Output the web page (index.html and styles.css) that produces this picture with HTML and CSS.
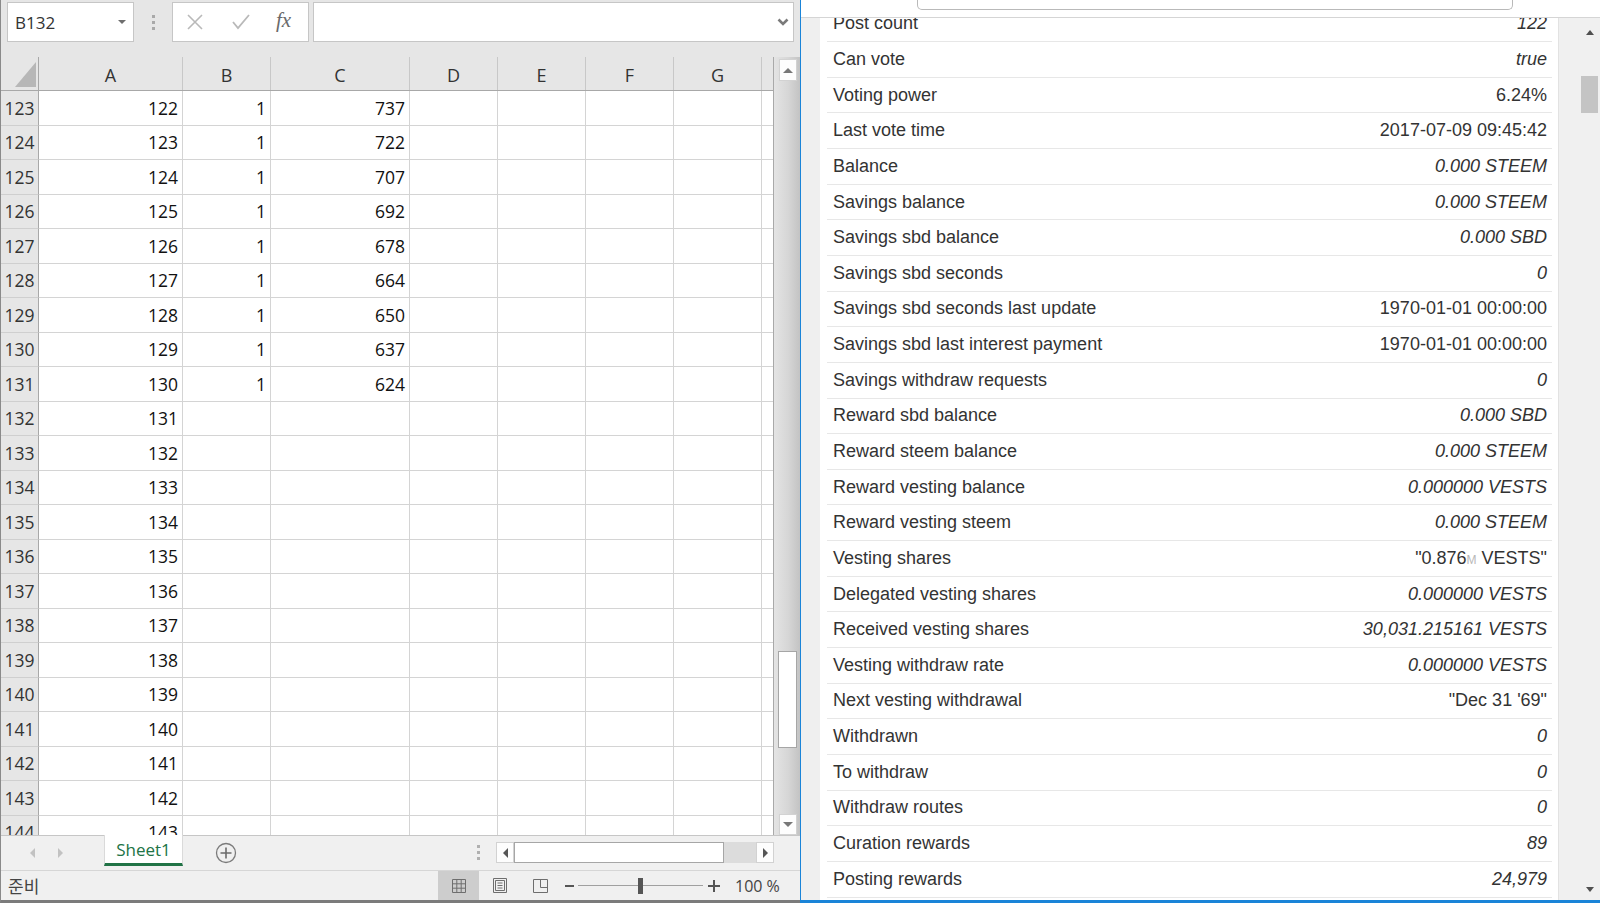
FILE: index.html
```html
<!DOCTYPE html>
<html>
<head>
<meta charset="utf-8">
<link rel="stylesheet" href="styles.css">
</head>
<body>
<div class="screen">
  <div class="excel">
    <div class="fbar">
      <div class="namebox"><span>B132</span><span class="tri-down"></span></div>
      <div class="grip"><i></i><i></i><i></i></div>
      <div class="fbtns">
        <svg class="ico-x" width="18" height="18" viewBox="0 0 18 18"><path d="M2 2 L16 16 M16 2 L2 16" stroke="#b9b9b9" stroke-width="1.6" fill="none"/></svg>
        <svg class="ico-ok" width="20" height="18" viewBox="0 0 20 18"><path d="M2 9 L7 15 L18 2" stroke="#b9b9b9" stroke-width="1.8" fill="none"/></svg>
        <span class="fx">fx</span>
      </div>
      <div class="finput">
        <svg width="12" height="8" viewBox="0 0 12 8"><path d="M1.5 1.5 L6 6 L10.5 1.5" stroke="#7a7a7a" stroke-width="2.6" fill="none"/></svg>
      </div>
    </div>
    <div class="sheet">
      <div class="grid">
        <div class="hdr">
          <div class="corner"><svg width="21" height="25" viewBox="0 0 21 25"><path d="M21 0 L21 25 L0 25 Z" fill="#b7b7b7"/></svg></div>
          <div>A</div><div>B</div><div>C</div><div>D</div><div>E</div><div>F</div><div>G</div><div class="last"></div>
        </div>
        <div class="rows">
          <div class="row"><div class="rh">123</div><div>122</div><div>1</div><div>737</div><div></div><div></div><div></div><div></div><div class="last"></div></div>
          <div class="row"><div class="rh">124</div><div>123</div><div>1</div><div>722</div><div></div><div></div><div></div><div></div><div class="last"></div></div>
          <div class="row"><div class="rh">125</div><div>124</div><div>1</div><div>707</div><div></div><div></div><div></div><div></div><div class="last"></div></div>
          <div class="row"><div class="rh">126</div><div>125</div><div>1</div><div>692</div><div></div><div></div><div></div><div></div><div class="last"></div></div>
          <div class="row"><div class="rh">127</div><div>126</div><div>1</div><div>678</div><div></div><div></div><div></div><div></div><div class="last"></div></div>
          <div class="row"><div class="rh">128</div><div>127</div><div>1</div><div>664</div><div></div><div></div><div></div><div></div><div class="last"></div></div>
          <div class="row"><div class="rh">129</div><div>128</div><div>1</div><div>650</div><div></div><div></div><div></div><div></div><div class="last"></div></div>
          <div class="row"><div class="rh">130</div><div>129</div><div>1</div><div>637</div><div></div><div></div><div></div><div></div><div class="last"></div></div>
          <div class="row"><div class="rh">131</div><div>130</div><div>1</div><div>624</div><div></div><div></div><div></div><div></div><div class="last"></div></div>
          <div class="row"><div class="rh">132</div><div>131</div><div></div><div></div><div></div><div></div><div></div><div></div><div class="last"></div></div>
          <div class="row"><div class="rh">133</div><div>132</div><div></div><div></div><div></div><div></div><div></div><div></div><div class="last"></div></div>
          <div class="row"><div class="rh">134</div><div>133</div><div></div><div></div><div></div><div></div><div></div><div></div><div class="last"></div></div>
          <div class="row"><div class="rh">135</div><div>134</div><div></div><div></div><div></div><div></div><div></div><div></div><div class="last"></div></div>
          <div class="row"><div class="rh">136</div><div>135</div><div></div><div></div><div></div><div></div><div></div><div></div><div class="last"></div></div>
          <div class="row"><div class="rh">137</div><div>136</div><div></div><div></div><div></div><div></div><div></div><div></div><div class="last"></div></div>
          <div class="row"><div class="rh">138</div><div>137</div><div></div><div></div><div></div><div></div><div></div><div></div><div class="last"></div></div>
          <div class="row"><div class="rh">139</div><div>138</div><div></div><div></div><div></div><div></div><div></div><div></div><div class="last"></div></div>
          <div class="row"><div class="rh">140</div><div>139</div><div></div><div></div><div></div><div></div><div></div><div></div><div class="last"></div></div>
          <div class="row"><div class="rh">141</div><div>140</div><div></div><div></div><div></div><div></div><div></div><div></div><div class="last"></div></div>
          <div class="row"><div class="rh">142</div><div>141</div><div></div><div></div><div></div><div></div><div></div><div></div><div class="last"></div></div>
          <div class="row"><div class="rh">143</div><div>142</div><div></div><div></div><div></div><div></div><div></div><div></div><div class="last"></div></div>
          <div class="row"><div class="rh">144</div><div>143</div><div></div><div></div><div></div><div></div><div></div><div></div><div class="last"></div></div>
        </div>
      </div>
      <div class="vscroll">
        <div class="vbtn"><span class="tri-up"></span></div>
        <div class="vthumb"></div>
        <div class="vbtn down"><span class="tri-dn"></span></div>
      </div>
    </div>
    <div class="tabbar">
      <div class="tabnav"><span class="tri-l"></span><span class="tri-r"></span></div>
      <div class="tab">Sheet1</div>
      <svg class="addsheet" width="22" height="22" viewBox="0 0 22 22"><circle cx="11" cy="11" r="9.5" stroke="#7b7b7b" stroke-width="1.3" fill="none"/><path d="M11 5.5 V16.5 M5.5 11 H16.5" stroke="#6b6b6b" stroke-width="1.6"/></svg>
      <div class="hgrip"><i></i><i></i><i></i></div>
      <div class="hscroll">
        <div class="hbtn"><span class="tri-l dark"></span></div>
        <div class="hthumb"></div>
        <div class="htrack"></div>
        <div class="hbtn"><span class="tri-r dark"></span></div>
      </div>
    </div>
    <div class="status">
      <span class="ready">준비</span>
      <div class="views">
        <div class="vw on"><svg width="14" height="14" viewBox="0 0 14 14"><path d="M0.5 0.5 H13.5 V13.5 H0.5 Z M0.5 4.8 H13.5 M0.5 9.2 H13.5 M4.8 0.5 V13.5 M9.2 0.5 V13.5" stroke="#6e6e6e" fill="none"/></svg></div>
        <div class="vw"><svg width="14" height="15" viewBox="0 0 14 15"><path d="M0.5 0.5 H13.5 V14.5 H0.5 Z M2.5 2.5 H11.5 V12.5 H2.5 Z M4.5 5 H9.5 M4.5 7.5 H9.5 M4.5 10 H9.5" stroke="#6e6e6e" fill="none"/></svg></div>
        <div class="vw"><svg width="15" height="14" viewBox="0 0 15 14"><path d="M0.5 0.5 H14.5 V13.5 H0.5 Z M7.5 0.5 V8.5 H14.5" stroke="#6e6e6e" fill="none"/></svg></div>
      </div>
      <div class="zoom">
        <span class="zminus"></span>
        <div class="zline"><span class="zthumb"></span></div>
        <svg width="12" height="12" viewBox="0 0 12 12"><path d="M6 0 V12 M0 6 H12" stroke="#555" stroke-width="2"/></svg>
        <span class="zpct">100 %</span>
      </div>
    </div>
  </div>

  <div class="browser">
    <div class="topbar"><div class="popup"></div></div>
    <div class="bbody">
      <div class="gutter"></div>
      <div class="panel">
        <div class="list">
          <div class="kv"><span>Post count</span><em>122</em></div>
          <div class="kv"><span>Can vote</span><em>true</em></div>
          <div class="kv"><span>Voting power</span><span>6.24%</span></div>
          <div class="kv"><span>Last vote time</span><span>2017-07-09 09:45:42</span></div>
          <div class="kv"><span>Balance</span><em>0.000 STEEM</em></div>
          <div class="kv"><span>Savings balance</span><em>0.000 STEEM</em></div>
          <div class="kv"><span>Savings sbd balance</span><em>0.000 SBD</em></div>
          <div class="kv"><span>Savings sbd seconds</span><em>0</em></div>
          <div class="kv"><span>Savings sbd seconds last update</span><span>1970-01-01 00:00:00</span></div>
          <div class="kv"><span>Savings sbd last interest payment</span><span>1970-01-01 00:00:00</span></div>
          <div class="kv"><span>Savings withdraw requests</span><em>0</em></div>
          <div class="kv"><span>Reward sbd balance</span><em>0.000 SBD</em></div>
          <div class="kv"><span>Reward steem balance</span><em>0.000 STEEM</em></div>
          <div class="kv"><span>Reward vesting balance</span><em>0.000000 VESTS</em></div>
          <div class="kv"><span>Reward vesting steem</span><em>0.000 STEEM</em></div>
          <div class="kv"><span>Vesting shares</span><span>"0.876<small>M</small> VESTS"</span></div>
          <div class="kv"><span>Delegated vesting shares</span><em>0.000000 VESTS</em></div>
          <div class="kv"><span>Received vesting shares</span><em>30,031.215161 VESTS</em></div>
          <div class="kv"><span>Vesting withdraw rate</span><em>0.000000 VESTS</em></div>
          <div class="kv"><span>Next vesting withdrawal</span><span>"Dec 31 '69"</span></div>
          <div class="kv"><span>Withdrawn</span><em>0</em></div>
          <div class="kv"><span>To withdraw</span><em>0</em></div>
          <div class="kv"><span>Withdraw routes</span><em>0</em></div>
          <div class="kv"><span>Curation rewards</span><em>89</em></div>
          <div class="kv"><span>Posting rewards</span><em>24,979</em></div>
        </div>
      </div>
      <div class="sbar">
        <div class="sbcol">
          <div class="sbbtn"><span class="tri-up dark"></span></div>
          <div class="sbthumb"></div>
          <div class="sbbtn bottom"><span class="tri-dn dark"></span></div>
        </div>
      </div>
    </div>
  </div>
</div>
</body>
</html>
```

FILE: styles.css
```css
* { box-sizing: border-box; }
html, body { margin: 0; padding: 0; }
body { width: 1600px; height: 903px; overflow: hidden; background: #fff; }

.screen { display: flex; height: 903px; }

/* ---------- Excel ---------- */
.excel {
  width: 800px; flex: none; display: flex; flex-direction: column;
  background: #e6e6e6; border-left: 1px solid #8a8a8a; border-bottom: 3px solid #7b7b7b;
  font-family: "Open Sans", "Liberation Sans", sans-serif; color: #444;
}
.fbar { height: 57px; flex: none; display: flex; align-items: flex-start; padding: 2px 6px 0 6px; }
.namebox {
  width: 127px; height: 40px; background: #fff; border: 1px solid #c6c6c6;
  display: flex; align-items: center; justify-content: space-between; padding: 0 7px 0 7px;
  font-size: 17px; color: #333;
}
.tri-down { width: 0; height: 0; border-left: 4px solid transparent; border-right: 4px solid transparent; border-top: 4px solid #6e6e6e; }
.grip { width: 38px; height: 40px; display: flex; flex-direction: column; align-items: center; justify-content: center; gap: 3px; }
.grip i, .hgrip i { display: block; width: 3px; height: 3px; background: #a9a9a9; }
.fbtns {
  width: 137px; height: 40px; background: #fff; border: 1px solid #c6c6c6;
  display: flex; align-items: center; padding-left: 13px;
}
.ico-x { margin-right: 27px; }
.ico-ok { margin-right: 25px; }
.fx { font-family: "Liberation Serif", serif; font-style: italic; font-size: 21px; color: #6a6a6a; margin-top: -4px; }
.finput {
  margin-left: 4px; flex: 1; height: 40px; background: #fff; border: 1px solid #c6c6c6;
  display: flex; align-items: center; justify-content: flex-end; padding-right: 4px;
}

.sheet { height: 778px; flex: none; display: flex; }
.grid { width: 773px; flex: none; display: flex; flex-direction: column; background: #fff; border-right: 1px solid #a9a9a9; }
.hdr, .row { display: grid; grid-template-columns: 38px 144px 88px 139px 88px 88px 88px 88px 1fr; }
.hdr { height: 34px; flex: none; background: #e6e6e6; border-bottom: 1px solid #a8a8a8; }
.hdr > div {
  border-right: 1px solid #c8c8c8; display: flex; align-items: center; justify-content: center;
  font-size: 18px; color: #333; padding-top: 2px;
}
.hdr > .corner { border-right-color: #a8a8a8; align-items: flex-end; justify-content: flex-end; padding: 0 2px 3px 0; }
.hdr > .last, .row > .last { border-right: none; }
.rows { flex: 1; overflow: hidden; }
.row { height: 34.5px; }
.row > div {
  border-right: 1px solid #d4d4d4; border-bottom: 1px solid #d4d4d4;
  display: flex; align-items: center; justify-content: flex-end; padding-right: 4px;
  font-size: 17.5px; color: #111;
}
.row > .rh { background: #e6e6e6; border-right-color: #a8a8a8; border-bottom-color: #cfcfcf; justify-content: center; padding: 0; color: #333; }

.vscroll {
  flex: 1; display: flex; flex-direction: column; align-items: center; padding: 2px 1px 0 2px;
  background: linear-gradient(to right, #e4e4e4, #d6d6d6 55%, #c3c3c3);
}
.vbtn { width: 18px; height: 22px; background: #fdfdfd; border: 1px solid #d2d2d2; display: flex; align-items: center; justify-content: center; flex: none; }
.vbtn.down { margin-top: auto; height: 21px; }
.vthumb { width: 19px; height: 97px; margin-top: 570px; background: #fff; border: 1px solid #a6a6a6; flex: none; }
.tri-up { width: 0; height: 0; border-left: 5px solid transparent; border-right: 5px solid transparent; border-bottom: 5px solid #777; }
.tri-dn { width: 0; height: 0; border-left: 5px solid transparent; border-right: 5px solid transparent; border-top: 5px solid #777; }
.tri-l { width: 0; height: 0; border-top: 5px solid transparent; border-bottom: 5px solid transparent; border-right: 5px solid #c2c2c2; }
.tri-r { width: 0; height: 0; border-top: 5px solid transparent; border-bottom: 5px solid transparent; border-left: 5px solid #c2c2c2; }
.tri-l.dark { border-right-color: #555; }
.tri-r.dark { border-left-color: #555; }
.tri-up.dark { border-bottom-color: #505050; border-left-width: 4px; border-right-width: 4px; }
.tri-dn.dark { border-top-color: #505050; border-left-width: 4px; border-right-width: 4px; }

.tabbar { height: 35px; flex: none; display: flex; align-items: flex-start; background: #f0f0f0; border-top: 1px solid #c6c6c6; }
.tabnav { width: 103px; height: 33px; display: flex; align-items: center; gap: 23px; padding-left: 29px; }
.tab {
  width: 79px; height: 31px; background: #fff; border-bottom: 3px solid #217346; border-left: 1px solid #dadada; border-right: 1px solid #dadada;
  display: flex; align-items: center; justify-content: center; color: #217346; font-size: 17px; margin-top: -1px;
}
.addsheet { margin: 6px 0 0 32px; }
.hgrip { width: 22px; margin-left: 230px; height: 33px; display: flex; flex-direction: column; align-items: center; justify-content: center; gap: 3px; }
.hgrip i { background: #b0b0b0; }
.hscroll { margin: 6px 0 0 7px; height: 21px; width: 278px; display: flex; }
.hbtn { width: 18px; height: 21px; background: #fdfdfd; border: 1px solid #d2d2d2; display: flex; align-items: center; justify-content: center; flex: none; }
.hthumb { width: 210px; background: #fff; border: 1px solid #a6a6a6; flex: none; }
.htrack { flex: 1; background: #dcdcdc; }

.status { height: 30px; flex: none; display: flex; align-items: center; background: #f0f0f0; border-top: 1px solid #d6d6d6; }
.ready { font-family: "Noto Sans CJK KR", sans-serif; font-size: 17px; color: #444; padding-left: 7px; width: 437px; }
.views { display: flex; height: 100%; }
.vw { width: 41px; height: 100%; display: flex; align-items: center; justify-content: center; }
.vw.on { background: #cdcdcd; }
.zoom { display: flex; align-items: center; margin-left: 4px; }
.zminus { width: 9px; height: 2px; background: #555; }
.zline { width: 125px; height: 1px; background: #a0a0a0; margin: 0 5px 0 4px; display: flex; justify-content: center; align-items: center; }
.zthumb { width: 5px; height: 16px; background: #555; }
.zpct { font-size: 16px; color: #444; margin-left: 15px; }

/* ---------- Browser ---------- */
.browser { flex: 1; display: flex; flex-direction: column; border-left: 1px solid #1a84d8; border-bottom: 3px solid #1a84d8; background: #f0f0f0; }
.topbar { height: 18px; flex: none; background: #fff; border-bottom: 1px solid #d5d5d5; }
.popup { width: 596px; height: 10px; margin-left: 116px; background: #fff; border: 1px solid #b9b9b9; border-top: none; border-radius: 0 0 5px 5px; }
.bbody { flex: 1; display: flex; overflow: hidden; }
.gutter { width: 19px; flex: none; background: #efefef; }
.panel { width: 738px; flex: none; background: #fff; overflow: hidden; padding: 0 6px 0 7px; }
.list { margin-top: -11.5px; }
.kv {
  height: 35.65px; display: flex; justify-content: space-between; align-items: center;
  border-bottom: 1px solid #e7e7e7; padding: 0 5px 0 6px;
  font-family: "Liberation Sans", Arial, sans-serif; font-size: 18px; color: #333;
}
.kv em { font-style: italic; }
.kv small { font-size: 12px; color: #b8b8b8; }
.sbar { flex: 1; background: #f0f0f0; border-left: 1px solid #e2e2e2; display: flex; justify-content: flex-end; }
.sbcol { width: 20px; display: flex; flex-direction: column; }
.sbbtn { height: 17px; margin-top: 6px; display: flex; align-items: center; justify-content: center; flex: none; }
.sbbtn.bottom { margin-top: auto; margin-bottom: 2px; }
.sbthumb { width: 17px; height: 37px; margin: 35px 0 0 1px; background: #c4c4c4; flex: none; }
```
